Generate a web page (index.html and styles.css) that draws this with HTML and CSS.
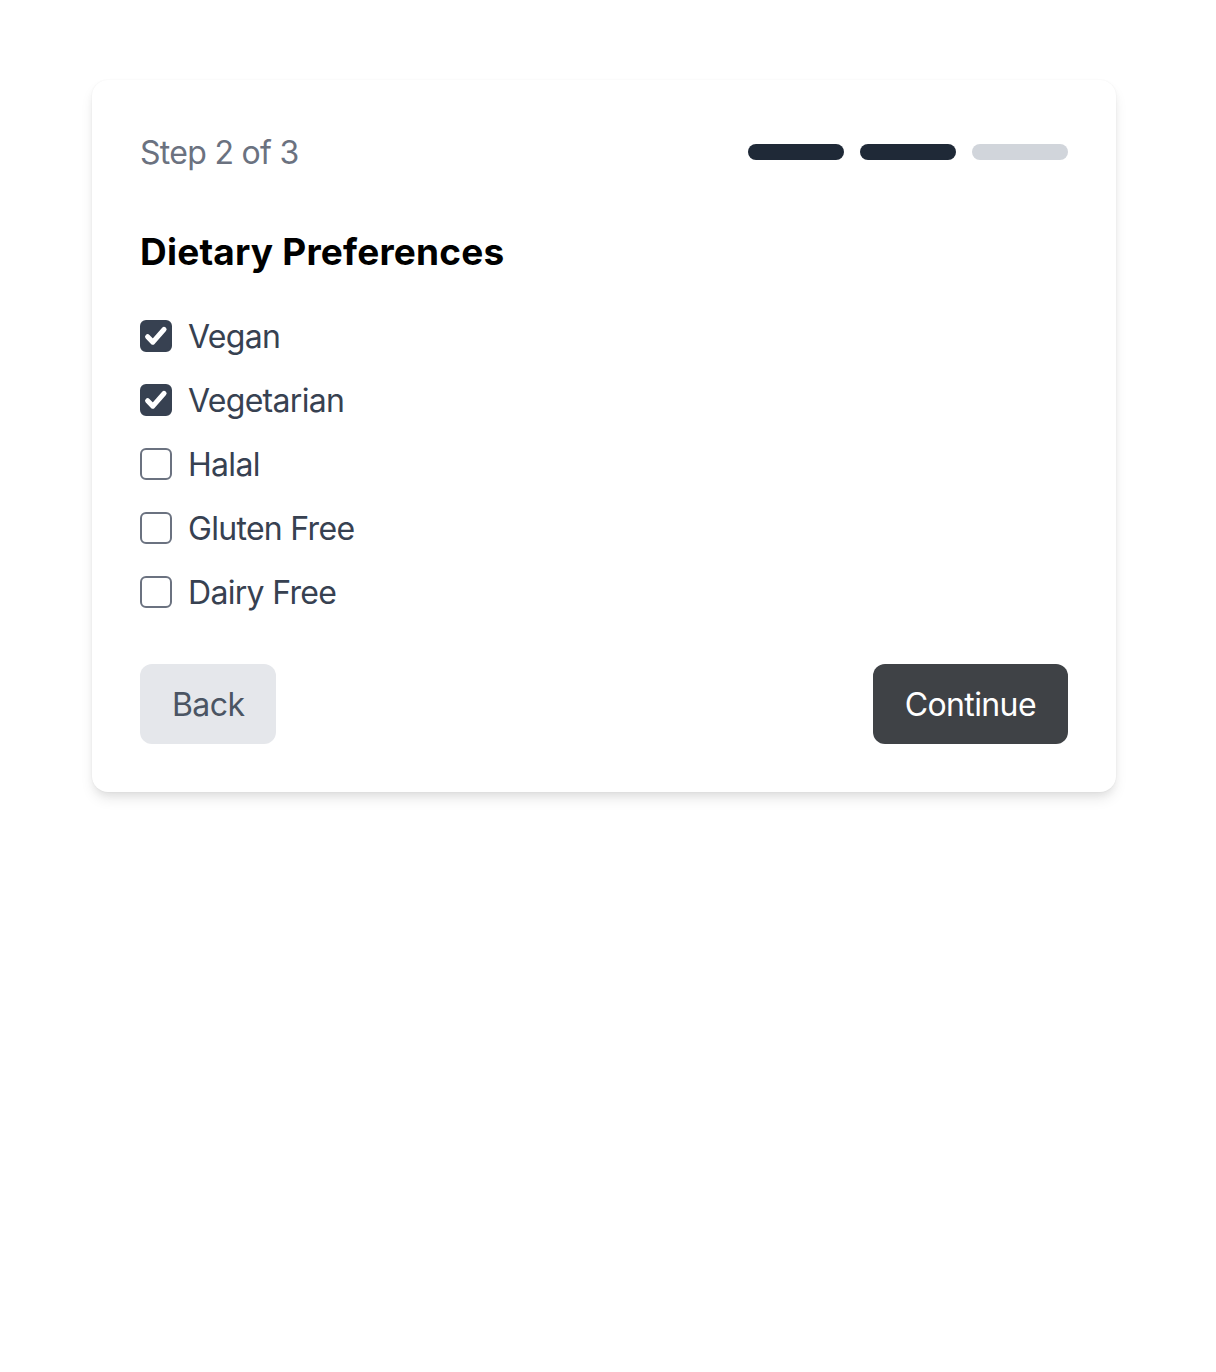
FILE: index.html
```html
<!DOCTYPE html>
<html lang="en">
<head>
    <meta charset="UTF-8">
    <meta name="viewport" content="width=device-width, initial-scale=1.0">
    <title>Dietary Preferences</title>
    <link rel="stylesheet" href="styles.css">
</head>
<body>

<!-- Wizard Card -->
<div class="card">
    <div class="card-header">
        <span class="step-label">Step 2 of 3</span>
        <div class="progress">
            <span class="bar done"></span>
            <span class="bar done"></span>
            <span class="bar"></span>
        </div>
    </div>

    <h2 class="title">Dietary Preferences</h2>

    <ul class="options">
        <li><label><input type="checkbox" checked> <span class="option-text">Vegan</span></label></li>
        <li><label><input type="checkbox" checked> <span class="option-text">Vegetarian</span></label></li>
        <li><label><input type="checkbox"> <span class="option-text">Halal</span></label></li>
        <li><label><input type="checkbox"> <span class="option-text">Gluten Free</span></label></li>
        <li><label><input type="checkbox"> <span class="option-text">Dairy Free</span></label></li>
    </ul>

    <div class="actions">
        <button class="btn btn-back">Back</button>
        <button class="btn btn-continue">Continue</button>
    </div>
</div>

</body>
</html>
```

FILE: styles.css
```css
html, body {
    min-height: 100%;
}

body {
    font-family: 'Inter', 'Noto Sans', Arial, sans-serif;
    margin: 0;
    padding: 80px 100px 80px 92px;
    background: #fff;
    color: #374151;
}

/* Card */
.card {
    width: 928px;
    padding: 48px;
    background-color: #fff;
    border-radius: 16px;
    box-shadow: 0 0 2px rgba(0, 0, 0, 0.05), 0 8px 14px -2px rgba(0, 0, 0, 0.1), 0 4px 8px -2px rgba(0, 0, 0, 0.06);
}

.card-header {
    display: flex;
    justify-content: space-between;
    align-items: center;
    height: 48px;
}

.step-label {
    font-size: 32px;
    line-height: 48px;
    letter-spacing: -0.7px;
    color: #6b7280;
    padding-top: 2px;
}

.progress {
    display: flex;
    gap: 16px;
}

.progress .bar {
    width: 96px;
    height: 16px;
    border-radius: 8px;
    background-color: #d1d5db;
}

.progress .bar.done {
    background-color: #1f2937;
}

.title {
    margin: 56px 0 0;
    font-size: 37px;
    line-height: 40px;
    font-weight: 700;
    letter-spacing: 0.2px;
    color: #000;
}

/* Options */
.options {
    list-style: none;
    margin: 40px 0 0;
    padding: 0;
    display: flex;
    flex-direction: column;
    gap: 16px;
}

.options label {
    display: flex;
    align-items: center;
    gap: 16px;
    height: 48px;
    font-size: 32px;
    letter-spacing: -0.7px;
    color: #374151;
}

.option-text {
    line-height: 46px;
    padding-top: 2px;
}

.options input {
    appearance: none;
    -webkit-appearance: none;
    margin: 0;
    width: 32px;
    height: 32px;
    border: 2px solid #6b7280;
    border-radius: 6px;
    background-color: #fff;
    flex-shrink: 0;
}

.options input:checked {
    border-color: #374151;
    background-color: #374151;
    background-image: url("data:image/svg+xml,%3Csvg xmlns='http://www.w3.org/2000/svg' viewBox='0 0 16 16'%3E%3Cpath d='M3.2 8.4l3 3.1 6.4-7.3' fill='none' stroke='%23fff' stroke-width='2.9' stroke-linecap='round' stroke-linejoin='round'/%3E%3C/svg%3E");
    background-size: 100% 100%;
}

/* Buttons */
.actions {
    display: flex;
    justify-content: space-between;
    margin-top: 48px;
}

.btn {
    font-family: inherit;
    font-size: 32px;
    line-height: 48px;
    letter-spacing: -0.6px;
    padding: 17px 32px 15px;
    border: none;
    border-radius: 12px;
    cursor: pointer;
}

.btn-back {
    background-color: #e5e7eb;
    color: #4b5563;
}

.btn-continue {
    background-color: #3f4246;
    color: #fff;
}
```
